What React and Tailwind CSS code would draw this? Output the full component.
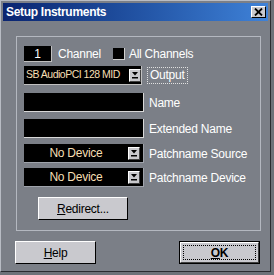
import React from "react";

function Arrow() {
  return (
    <div className="w-[12px] h-[13px] bg-[#c8c8cc] border-t border-l border-t-white border-l-white border-r border-b border-r-[#404040] border-b-[#404040] flex items-center justify-center">
      <svg width="8" height="8" viewBox="0 0 8 8">
        <polygon points="1,1 7,1 4,4.5" fill="#000" />
        <rect x="1" y="6" width="6" height="1.5" fill="#000" />
      </svg>
    </div>
  );
}

function Btn({ children, className = "" }) {
  return (
    <div className={"bg-[#c9c9ce] border border-t-white border-l-white border-r-black border-b-black flex items-center justify-center text-[12px] text-black " + className}>
      {children}
    </div>
  );
}

export default function App() {
  return (
    <div className="w-[274px] h-[275px] bg-[#6e7279] font-['Liberation_Sans',Arial,sans-serif] text-[11px] tracking-[-0.25px] text-white">
      <div className="w-[271px] h-[272px] bg-[#7b7f87] border-t border-l border-t-[#b8bcc4] border-l-[#b8bcc4] border-r border-b border-r-[#2a2c30] border-b-[#2a2c30] p-[2px] flex flex-col">
        {/* title bar */}
        <div className="h-[18px] bg-gradient-to-r from-[#0a2470] to-[#3f82d8] flex items-center justify-between pl-[3px] pr-[2px]">
          <span className="font-bold text-[12px] tracking-[-0.3px] text-white">Setup Instruments</span>
          <div className="w-[15px] h-[12px] bg-[#c9c9ce] border border-t-white border-l-white border-r-black border-b-black flex items-center justify-center">
            <svg width="9" height="8" viewBox="0 0 9 8">
              <path d="M1 0.5 L8 7.5 M8 0.5 L1 7.5" stroke="#000" strokeWidth="1.8" />
            </svg>
          </div>
        </div>

        {/* group box */}
        <div className="ml-[13px] mt-[15px] w-[245px] h-[195px] border border-[#b4b8c0] pl-[7px] pt-[9px] flex flex-col">
          {/* channel row */}
          <div className="flex items-center h-[16px]">
            <div className="w-[28px] h-[16px] bg-black border-r border-b border-r-[#c0c0c0] border-b-[#c0c0c0] flex items-center justify-center text-[12px] text-white">1</div>
            <span className="ml-[6px] text-[12px]">Channel</span>
            <div className="ml-[12px] w-[12px] h-[12px] bg-black border-r border-b border-r-[#d0d0d0] border-b-[#d0d0d0]" />
            <span className="ml-[4px] text-[12px]">All Channels</span>
          </div>

          {/* output row */}
          <div className="flex items-center h-[19px] mt-[4px]">
            <div className="w-[118px] h-[19px] bg-black flex items-center justify-between border-r border-b border-r-[#c0c0c0] border-b-[#c0c0c0]">
              <span className="pl-[2px] text-[10.5px] tracking-[-0.5px] text-[#f6dfb4] whitespace-nowrap">SB AudioPCI 128 MID</span>
              <Arrow />
            </div>
            <span className="ml-[5px] px-[2px] py-[1px] border border-dotted border-[#e0e0e0] text-[12px] leading-[13px]">Output</span>
          </div>

          {/* name */}
          <div className="flex items-center h-[19px] mt-[8px]">
            <div className="w-[120px] h-[19px] bg-black border-r border-b border-r-[#d8d8d8] border-b-[#d8d8d8]" />
            <span className="ml-[5px] text-[12px]">Name</span>
          </div>

          <div className="flex items-center h-[19px] mt-[7px]">
            <div className="w-[120px] h-[19px] bg-black border-r border-b border-r-[#d8d8d8] border-b-[#d8d8d8]" />
            <span className="ml-[5px] text-[12px]">Extended Name</span>
          </div>

          <div className="flex items-center h-[19px] mt-[6px]">
            <div className="w-[120px] h-[19px] bg-black border-r border-b border-r-[#a0a4ac] border-b-[#a0a4ac] flex items-center pr-[3px]">
              <span className="flex-1 text-center text-[12px] text-[#f6dfb4]">No Device</span>
              <Arrow />
            </div>
            <span className="ml-[5px] text-[12px]">Patchname Source</span>
          </div>

          <div className="flex items-center h-[19px] mt-[5px]">
            <div className="w-[120px] h-[19px] bg-black border-r border-b border-r-[#a0a4ac] border-b-[#a0a4ac] flex items-center pr-[3px]">
              <span className="flex-1 text-center text-[12px] text-[#f6dfb4]">No Device</span>
              <Arrow />
            </div>
            <span className="ml-[5px] text-[12px]">Patchname Device</span>
          </div>

          <Btn className="ml-[14px] mt-[10px] w-[90px] h-[23px]">
            <span><span className="underline">R</span>edirect...</span>
          </Btn>
        </div>

        {/* bottom buttons */}
        <div className="flex justify-between ml-[12px] mr-[8px] mt-[10px]">
          <Btn className="w-[81px] h-[23px]">
            <span><span className="underline">H</span>elp</span>
          </Btn>
          <div className="w-[81px] h-[23px] border border-black">
            <div className="w-full h-full bg-[#c9c9ce] border border-t-white border-l-white border-r-[#404040] border-b-[#404040] p-[2px]">
              <div className="w-full h-full border border-dotted border-black flex items-center justify-center text-[12px] font-bold text-black">
                <span><span className="underline">O</span>K</span>
              </div>
            </div>
          </div>
        </div>
      </div>
    </div>
  );
}
